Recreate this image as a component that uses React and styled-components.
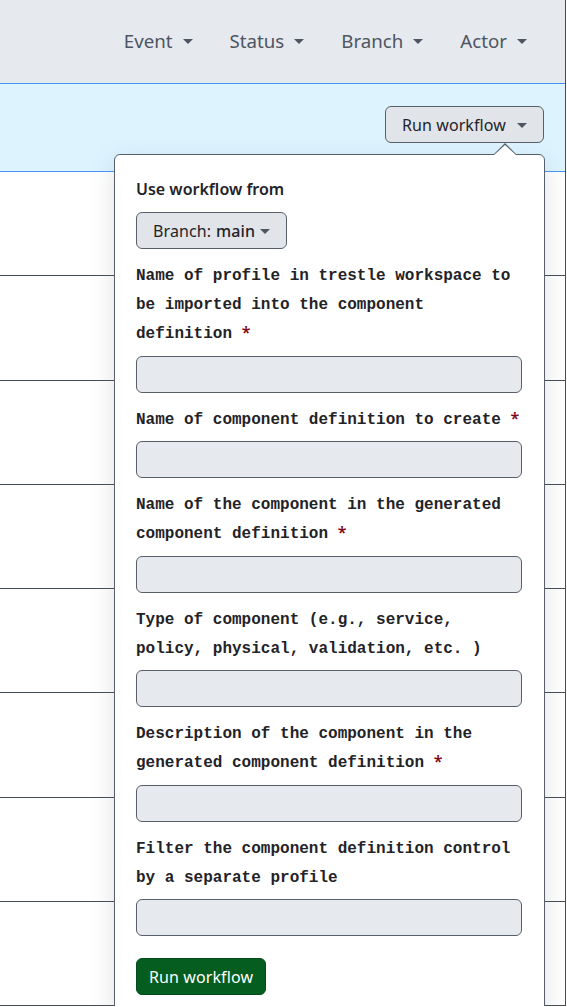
import React from 'react';
import styled, { createGlobalStyle } from 'styled-components';

const GlobalStyle = createGlobalStyle`
  html, body {
    margin: 0;
    padding: 0;
    background: #ffffff;
    font-family: "Noto Sans", "Open Sans", sans-serif;
    overflow: hidden;
  }
`

const Box = styled.div`
  width: 565px;
  margin-top: -5px;
  border-top: 1px solid #444c56;
  border-right: 1px solid #444c56;
  border-top-right-radius: 6px;
  overflow: visible;
`

const Header = styled.div`
  height: 88px;
  background: #e6e9ee;
  border-bottom: 1px solid #4493f8;
  border-top-right-radius: 6px;
  display: flex;
  align-items: center;
  justify-content: flex-end;
  gap: 37px;
  padding: 1px 38px 0 0;
  box-sizing: border-box;
`

const Filter = styled.div`
  display: flex;
  align-items: center;
  gap: 10px;
  font-size: 18.7px;
  color: #4d5561;
`

const Caret = styled.span`
  display: inline-block;
  width: 0;
  height: 0;
  border-left: 5px solid transparent;
  border-right: 5px solid transparent;
  border-top: 5px solid ${p => p.color || '#4d5561'};
  margin-top: 2px;
`

const Band = styled.div`
  position: relative;
  height: 88px;
  background: #ddf4ff;
  border-bottom: 1px solid #4493f8;
  box-sizing: border-box;
  display: flex;
  justify-content: flex-end;
  padding: 22px 21px 0 0;
`

const GreyButton = styled.button`
  height: 37px;
  display: inline-flex;
  align-items: center;
  gap: ${p => p.gap || 8}px;
  padding: 0 16px;
  background: #e1e4e9;
  border: 1px solid #57606a;
  border-radius: 6px;
  font-family: "Noto Sans", sans-serif;
  font-size: 16px;
  letter-spacing: 0.1px;
  color: #1f2328;
  box-sizing: border-box;
  cursor: pointer;
`

const Row = styled.div`
  height: 104.3px;
  border-bottom: 1px solid #444c56;
  box-sizing: border-box;
`

const Popover = styled.div`
  position: absolute;
  top: 70px;
  right: 20px;
  width: 431px;
  height: 900px;
  background: #ffffff;
  border: 1px solid #57606a;
  border-radius: 6px;
  box-shadow: 0 8px 24px rgba(110, 119, 129, 0.22);
  box-sizing: border-box;
  padding: 22px 22px 0 21px;
  z-index: 2;
  &::before, &::after {
    content: "";
    position: absolute;
    width: 0;
    height: 0;
    right: 27px;
    border-left: 12px solid transparent;
    border-right: 12px solid transparent;
  }
  &::before {
    top: -12px;
    border-bottom: 12px solid #57606a;
  }
  &::after {
    top: -10px;
    border-bottom: 11px solid #ffffff;
  }
`

const Title = styled.div`
  font-size: 16px;
  font-weight: 600;
  color: #1f2328;
  line-height: 24px;
  margin-bottom: 11px;
`

const BranchName = styled.span`
  font-weight: 500;
`

const Field = styled.div`
  margin-top: 13px;
`

const Label = styled.label`
  display: block;
  font-family: "Liberation Mono", "Cousine", monospace;
  font-weight: 700;
  font-size: 16px;
  line-height: 29px;
  color: #1f2328;
  margin-bottom: 6.5px;
`

const Star = styled.span`
  font-family: "Noto Sans", sans-serif;
  color: #82071e;
  font-weight: 600;
  line-height: 0;
`

const Input = styled.input`
  display: block;
  width: 386px;
  height: 37px;
  box-sizing: border-box;
  background: #e6e9ee;
  border: 1px solid #57606a;
  border-radius: 6px;
`

const RunButton = styled.button`
  margin-top: 22px;
  height: 37px;
  padding: 0 12px;
  background: #055d20;
  color: #ffffff;
  border: 1px solid #044a1a;
  border-radius: 6px;
  font-family: "Noto Sans", sans-serif;
  font-size: 16px;
  letter-spacing: 0.1px;
  box-sizing: border-box;
`

const fields = [
  { label: 'Name of profile in trestle workspace to be imported into the component definition', required: true },
  { label: 'Name of component definition to create', required: true },
  { label: 'Name of the component in the generated component definition', required: true },
  { label: 'Type of component (e.g., service, policy, physical, validation, etc. )', required: false },
  { label: 'Description of the component in the generated component definition', required: true },
  { label: 'Filter the component definition control by a separate profile', required: false },
]

export default function App() {
  return (
    <>
      <GlobalStyle />
      <Box>
        <Header>
          {['Event', 'Status', 'Branch', 'Actor'].map(f => (
            <Filter key={f}>{f}<Caret /></Filter>
          ))}
        </Header>
        <Band>
          <GreyButton gap={11}>Run workflow <Caret /></GreyButton>
          <Popover>
            <Title>Use workflow from</Title>
            <GreyButton gap={5}>Branch: <BranchName>main</BranchName><Caret /></GreyButton>
            {fields.map(f => (
              <Field key={f.label}>
                <Label>{f.label}{f.required && <> <Star>*</Star></>}</Label>
                <Input />
              </Field>
            ))}
            <RunButton>Run workflow</RunButton>
          </Popover>
        </Band>
        {[0, 1, 2, 3, 4, 5, 6, 7].map(i => <Row key={i} />)}
      </Box>
    </>
  );
}
